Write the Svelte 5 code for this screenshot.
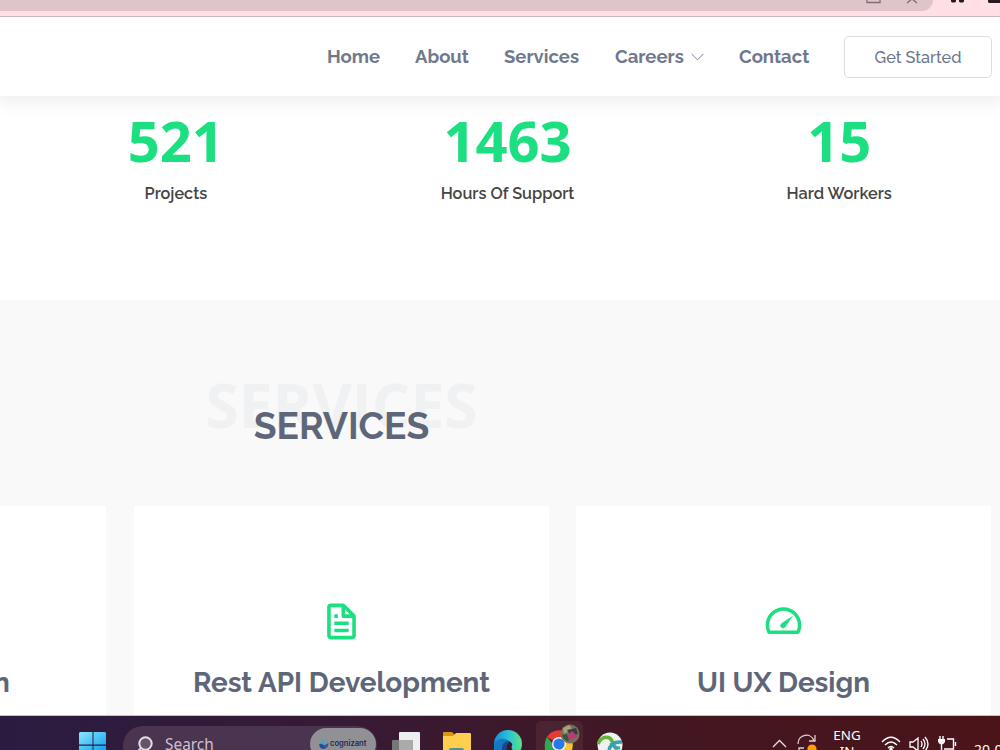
<script lang="ts">
  const links = [
    { label: "Home", width: 53 },
    { label: "About", width: 54 },
    { label: "Services", width: 76 },
    { label: "Careers", width: 89, menu: true },
    { label: "Contact", width: 71 },
  ];

  const counts = [
    { value: 521, label: "Projects" },
    { value: 1463, label: "Hours Of Support" },
    { value: 15, label: "Hard Workers" },
  ];
</script>

<div class="page">
  <div class="browser-bar">
    <div class="omnibox">
      <svg width="60" height="12" viewBox="0 0 60 12" fill="none" stroke="#806d76" stroke-width="1.3">
        <path d="M7 -4V2.5H20V-4M47 3L52 -1L57 3" />
      </svg>
    </div>
    <svg class="extensions" width="68" height="12" viewBox="0 0 68 12" fill="#27191e">
      <path d="M19 0h5v1.500l-1 1h-3l-1-1zM27 0h5v1.500l-1 1h-3l-1-1zM56 0h12v3H57l-1-1z" />
    </svg>
  </div>

  <header>
    <nav>
      {#each links as link}
        <a href="#top" class="nav-link" style={`width: ${link.width}px`}>
          {link.label}
          {#if link.menu}
            <svg width="13" height="8" viewBox="0 0 13 8" fill="none" stroke="#7a8396">
              <path d="M.7 1L6.500 6.800L12.300 1" />
            </svg>
          {/if}
        </a>
      {/each}
    </nav>
    <a href="#start" class="get-started">Get Started</a>
  </header>

  <section class="counts">
    {#each counts as count}
      <div class="count">
        <strong>{count.value}</strong>
        <p>{count.label}</p>
      </div>
    {/each}
  </section>

  <section class="services">
    <div class="section-title">
      <span>SERVICES</span>
      <h2>SERVICES</h2>
    </div>
    <div class="cards">
      <article class="card partial"><h4>n</h4></article>
      <article class="card">
        <svg viewBox="0 0 24 24">
          <path d="M19.900 8.590a1 1 0 0 0-.2-.3l-6-6A1 1 0 0 0 13 2H6c-1.100 0-2 .9-2 2v16c0 1.100.9 2 2 2h12c1.100 0 2-.9 2-2V9a1 1 0 0 0-.1-.410zM16.590 8H14V5.410L16.590 8zM6 20V4h6v5a1 1 0 0 0 1 1h5v10H6z" />
          <path d="M8 12h8v2H8zm0 4h8v2H8zm0-8h2v2H8z" />
        </svg>
        <h4>Rest API Development</h4>
      </article>
      <article class="card">
        <svg viewBox="0 0 24 24">
          <path d="M12 4C6.490 4 2 8.490 2 14a9.900 9.900 0 0 0 1.050 4.450c.17.340.520.550.9.550h16.100c.380 0 .730-.210.9-.550A9.900 9.900 0 0 0 22 14c0-5.510-4.490-10-10-10zm7.410 13H4.590A7.900 7.900 0 0 1 4 14c0-4.410 3.590-8 8-8s8 3.590 8 8a7.900 7.900 0 0 1-.59 3z" />
          <path d="M10.940 12.940a1.530 1.530 0 1 0 2.120 2.120l3.960-6.040-.04-.04z" />
        </svg>
        <h4>UI UX Design</h4>
      </article>
    </div>
  </section>

  <footer>
    <svg class="start" width="28" height="19" viewBox="0 0 28 19">
      <defs>
        <linearGradient id="win" x1="0" y1="0" x2="1" y2="1">
          <stop stop-color="#8ce6fb" />
          <stop offset="1" stop-color="#0b9ff0" />
        </linearGradient>
      </defs>
      <path fill="url(#win)" d="M1 0h12.500v12.500H0V1zM14.500 0H26l1 1v11.500H14.500zM0 13.700h13.500V19H0zM14.500 13.700H27V19H14.500z" />
    </svg>

    <div class="search">
      <svg width="18" height="20" viewBox="0 0 18 20" fill="#66536a" stroke="#e5dce6" stroke-width="2">
        <circle cx="10.500" cy="7.500" r="6.200" />
        <path d="M6 12L1 17.500" />
      </svg>
      <span>Search</span>
      <div class="cognizant">
        <svg width="10" height="11" viewBox="0 0 10 11">
          <path fill="#244b99" d="M0 5.500L5 2v8Q1 10 0 5.500z" />
          <path fill="#2fb2bd" d="M1 4.500Q3 0 6 1.500L5 6z" />
          <path fill="#35569f" d="M5 6.500L9.500 4Q9.500 9 5 10z" />
        </svg>
        cognizant
      </div>
    </div>

    <svg class="task-view" width="29" height="20" viewBox="0 0 29 20">
      <rect x="7" y="0" width="21" height="22" rx="1" fill="#eeeef0" />
      <rect x="0" y="8" width="21" height="14" rx="1" fill="#777" />
      <rect x="7" y="8" width="14" height="14" fill="#aaa" />
    </svg>

    <svg class="folder" width="28" height="20" viewBox="0 0 28 20">
      <path fill="#d89711" d="M0 1Q0 0 1 0h8l3 3v4H0z" />
      <path fill="#fdcf4c" d="M0 4h10l3-3h14q1 0 1 1v18H0z" />
      <path fill="#5b8e91" d="M6 18q0-2 2-2h11q2 0 2 2v2H6z" />
    </svg>

    <svg class="edge" width="28" height="21" viewBox="0 0 28 21">
      <defs>
        <linearGradient id="edge" x1="0" y1="0" x2="1" y2="0">
          <stop stop-color="#168dd8" />
          <stop offset=".55" stop-color="#2cc4d6" />
          <stop offset="1" stop-color="#5be37c" />
        </linearGradient>
      </defs>
      <circle cx="14" cy="14" r="14" fill="url(#edge)" />
      <path fill="#1877c2" d="M0 15C1 9 10 6 16 12L12 21H0z" />
      <path fill="#104b91" d="M8 21Q7 12 15 11q4 2 2 10z" />
      <path fill="#3b1722" d="M13 21Q12 14 16 12q4 2 1 5l2 4z" />
    </svg>

    <div class="active-app">
      <svg width="47" height="29" viewBox="0 0 47 29">
        <path fill="#e63b32" d="M11 16A14 14 0 0 1 35 16L23 23z" />
        <path fill="#34a653" d="M11 16Q8 20 9 29H20L16 22z" />
        <path fill="#fbc52d" d="M24 16H35Q38 22 36 29H25z" />
        <circle cx="23" cy="23" r="7" fill="#f5f5f5" />
        <circle cx="23" cy="23" r="5.600" fill="#2878e8" />
        <circle cx="34" cy="13" r="9.500" fill="#777158" />
        <path fill="#a5a27c" d="M27 7l6-3 3 4-8 5z" />
        <path fill="#343b4b" d="M31 9l9-2 2 6-7 2z" />
        <path fill="#b93b70" d="M31 15l5-5 6 6-9 3z" />
        <path fill="#35553d" d="M26 14l5-1 2 7q-5 0-7-6z" />
      </svg>
    </div>

    <svg class="vpn" width="26" height="18" viewBox="0 0 26 18">
      <circle cx="13" cy="13" r="12.500" fill="#edf4f0" />
      <path fill="none" stroke="#64b33b" stroke-width="3.500" d="M1 12C5 3 13 4 15 9c1 4 3 6 5 9" />
      <path fill="none" stroke="#3aa2ad" stroke-width="3.500" d="M12 18Q14 9 25 10" />
      <path fill="none" stroke="#3aa2ad" stroke-width="3" d="M14 11Q16 16 23 16" />
    </svg>

    <div class="tray">
      <svg class="up" width="15" height="9" viewBox="0 0 15 9" fill="none" stroke="#e9dddf" stroke-width="1.300">
        <path d="M1 8L7.500 1.500L14 8" />
      </svg>
      <svg class="update" width="20" height="18" viewBox="0 0 20 18" fill="none" stroke="#e4d1d4" stroke-width="1.300">
        <path d="M1 10C1 0 14-2 17 7M18 1v6h-6M2 18v-4h5" />
        <circle cx="15" cy="15" r="4.600" fill="#ff9c0b" stroke="none" />
      </svg>
      <div class="language">ENG<br />IN</div>
      <svg class="wifi" width="20" height="14" viewBox="0 0 20 14" fill="none" stroke="#fff" stroke-width="1.400">
        <path d="M1 6Q10-3.500 19 6M4 9q6-6 12 0M7 12q3-3 6 0" />
        <circle cx="10" cy="13" r="1" fill="#fff" />
      </svg>
      <svg class="volume" width="20" height="15" viewBox="0 0 20 15" fill="none" stroke="#fff" stroke-width="1.300">
        <path d="M1 6h3l5-4v13l-5-4H1zM12 5q2 3 0 6M14 3q4 5 0 10M16 1q6 7 0 14" />
      </svg>
      <svg class="battery" width="19" height="15" viewBox="0 0 19 15" fill="none" stroke="#fff" stroke-width="1.400">
        <path d="M2 0v4M5 0v4M3.500 8v7M9 3h6.500v10H6M17.500 6v4" />
        <path d="M0 3h7v3q-3.500 5-7 0z" fill="#fff" stroke="none" />
      </svg>
      <span class="date">20-0</span>
    </div>
  </footer>
</div>

<style>
  :global(body) {
    margin: 0;
    overflow: hidden;
  }
  .page {
    width: 1000px;
    height: 750px;
    display: flex;
    flex-direction: column;
    overflow: hidden;
    background: #fff;
    color: #5e6779;
    font-family: Raleway, Lato, sans-serif;
  }
  svg {
    display: block;
    flex: none;
  }
  a {
    color: inherit;
    text-decoration: none;
  }
  h2,
  h4,
  p {
    margin: 0;
  }
  .browser-bar {
    height: 16px;
    flex: none;
    display: flex;
    border-bottom: 1px solid #c8b6bc;
    background: #ffdee5;
  }
  .omnibox {
    width: 933px;
    height: 11px;
    display: flex;
    justify-content: flex-end;
    border-bottom-right-radius: 13px;
    background: #dfc4ca;
  }
  .omnibox svg {
    margin-right: 13px;
  }
  .extensions {
    margin-left: -1px;
  }
  header {
    position: relative;
    z-index: 1;
    height: 79px;
    flex: none;
    display: flex;
    align-items: center;
    justify-content: flex-end;
    padding-right: 8px;
    background: #fff;
    box-shadow: 0 2px 18px 3px rgba(0, 0, 0, 0.08);
    clip-path: inset(0 0 -24px);
  }
  nav {
    display: flex;
    gap: 35px;
  }
  .nav-link {
    display: flex;
    align-items: center;
    justify-content: space-between;
    color: #6f788c;
    font-size: 18.5px;
    font-weight: 700;
    white-space: nowrap;
  }
  .get-started {
    width: 148px;
    height: 42px;
    box-sizing: border-box;
    margin-left: 34px;
    border: 1px solid #dcdde1;
    border-radius: 5px;
    color: #6c768b;
    font-size: 16.3px;
    font-weight: 500;
    line-height: 42px;
    text-align: center;
  }
  .counts {
    width: 995px;
    height: 204px;
    flex: none;
    display: grid;
    grid-template-columns: repeat(3, 1fr);
    margin-left: 10px;
    text-align: center;
  }
  .count strong {
    display: block;
    height: 58px;
    margin-top: 15px;
    color: #1bdf80;
    font: 700 56px/58px "Open Sans", sans-serif;
  }
  .count p {
    margin-top: 15px;
    color: #444;
    font-size: 16.3px;
    font-weight: 600;
    line-height: 20px;
  }
  .services {
    height: 415px;
    flex: none;
    overflow: hidden;
    background: #f9f9f9;
  }
  .section-title {
    width: 683px;
    height: 206px;
    display: grid;
    text-align: center;
  }
  .section-title span,
  .section-title h2 {
    grid-area: 1 / 1;
  }
  .section-title span {
    padding-top: 75px;
    color: #f0f1f3;
    font: 700 60.5px/60px "Open Sans", sans-serif;
  }
  .section-title h2 {
    z-index: 1;
    padding-top: 103px;
    font-size: 37.2px;
    line-height: 46px;
  }
  .cards {
    display: flex;
    gap: 27px;
  }
  .card {
    width: 415px;
    height: 209px;
    flex: none;
    display: flex;
    flex-direction: column;
    align-items: center;
    background: #fff;
  }
  .card.partial {
    width: 106px;
    margin-right: 1px;
    align-items: flex-start;
  }
  .card svg {
    width: 43px;
    height: 43px;
    margin-top: 94px;
    fill: #1bdf80;
  }
  .card h4 {
    margin-top: 22px;
    font-size: 27.9px;
    line-height: 36px;
    white-space: nowrap;
  }
  .card.partial h4 {
    margin: 159px 0 0 -7px;
  }
  footer {
    height: 35px;
    box-sizing: border-box;
    flex: none;
    display: flex;
    overflow: hidden;
    padding-left: 79px;
    border-top: 1px solid #c9bdc8;
    background: linear-gradient(90deg, #2a1c41, #371a35 35%, #421722 65%, #4b1419);
    font-family: "Noto Sans", sans-serif;
  }
  .start {
    margin-top: 16px;
  }
  .search {
    width: 254px;
    height: 40px;
    flex: none;
    display: flex;
    margin: 10px 0 0 16px;
    border-radius: 20px;
    background: #4a344f;
    color: #cfc0d0;
    font-size: 15.4px;
    line-height: 37px;
  }
  .search > svg {
    margin: 10px 0 0 12px;
  }
  .search > span {
    width: 50px;
    margin-left: 12px;
  }
  .cognizant {
    width: 66px;
    height: 32px;
    box-sizing: border-box;
    display: flex;
    gap: 1px;
    margin: 2px 1px 0 auto;
    padding-left: 9px;
    border-radius: 16px;
    background: #919094;
    color: #24265b;
    font: 600 7.6px/32px Inter, sans-serif;
  }
  .cognizant svg {
    margin-top: 11px;
  }
  .task-view {
    margin: 16px 0 0 15px;
  }
  .folder {
    margin: 16px 0 0 22px;
  }
  .edge {
    margin: 14px 0 0 23px;
  }
  .active-app {
    width: 47px;
    height: 40px;
    flex: none;
    box-sizing: border-box;
    margin: 5px 0 0 14px;
    border-radius: 5px;
    background: #4c2431;
  }
  .vpn {
    margin: 16px 0 0 14px;
  }
  .tray {
    display: flex;
    flex: none;
    margin-left: 149px;
    color: #fff;
  }
  .up {
    margin-top: 23px;
  }
  .update {
    margin: 18px 0 0 10px;
  }
  .language {
    width: 30px;
    margin: 11px 0 0 15px;
    font-size: 13.4px;
    line-height: 16px;
    text-align: center;
  }
  .wifi {
    margin: 20px 0 0 19px;
  }
  .volume {
    margin: 20px 0 0 8px;
  }
  .battery {
    margin: 20px 0 0 9px;
  }
  .date {
    margin: 24px 0 0 17px;
    font-size: 14px;
    line-height: 20px;
    white-space: nowrap;
  }
</style>
